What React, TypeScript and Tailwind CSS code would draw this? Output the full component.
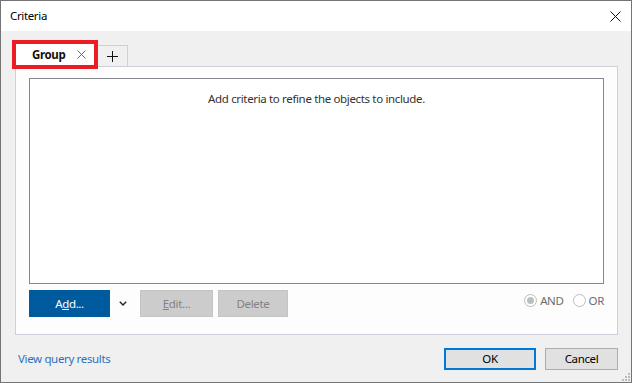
import React from "react";

function Radio({ label, checked }: { label: string; checked?: boolean }) {
  return (
    <div className="flex items-center">
      <span className="w-[13px] h-[13px] rounded-full border border-[#bcbcbc] bg-white flex items-center justify-center">
        {checked && <span className="w-[7px] h-[7px] rounded-full bg-[#bdbdbd]" />}
      </span>
      <span className="ml-[3px] text-[#6d6d6d]">{label}</span>
    </div>
  );
}

export default function App() {
  return (
    <div
      className="w-[632px] h-[383px] border border-[#747474] bg-[#f0f0f0] flex flex-col text-[11.5px] tracking-[-0.35px] text-black leading-none"
      style={{ fontFamily: '"Noto Sans", "Open Sans", sans-serif' }}
    >
      {/* Title bar */}
      <div className="h-[30px] bg-white flex items-center justify-between pl-[9px] pr-[9px] shrink-0">
        <span>Criteria</span>
        <svg width="11" height="11" viewBox="0 0 11 11" className="mr-[1px]">
          <path d="M0.5 0.5 L10.5 10.5 M10.5 0.5 L0.5 10.5" stroke="#111" strokeWidth="1" />
        </svg>
      </div>

      {/* Body */}
      <div className="flex-1 flex flex-col pl-[14px] pr-[13px]">
        {/* Tabs */}
        <div className="flex items-end mt-[9px] -ml-[3px] relative z-10 h-[29px]">
          <div className="w-[86px] h-[29px] border-[4px] border-[#ec1c24] bg-white flex items-center pl-[16px]">
            <span className="font-bold text-[#111]">Group</span>
            <svg width="9" height="9" viewBox="0 0 9 9" className="ml-[12px]">
              <path d="M0.5 0.5 L8.5 8.5 M8.5 0.5 L0.5 8.5" stroke="#6a6a6a" strokeWidth="1" />
            </svg>
          </div>
          <div className="w-[30px] h-[21px] mb-[3px] border border-l-0 border-b-0 border-[#cfcfd8] bg-[#f0f0f0] flex items-center justify-center">
            <svg width="11" height="11" viewBox="0 0 11 11">
              <path d="M5.5 0 V11 M0 5.5 H11" stroke="#111" strokeWidth="1" />
            </svg>
          </div>
        </div>

        {/* Panel */}
        <div className="-mt-[3px] h-[269px] border border-[#cfcfdb] bg-[#fdfdfd] flex flex-col pt-[11px] px-[13px] pb-[16px]">
          <div className="h-[206px] border border-[#828790] bg-white flex justify-center pt-[14px]">
            <span className="text-[#333]">Add criteria to refine the objects to include.</span>
          </div>
          <div className="mt-[6px] flex items-center h-[27px]">
            <button className="w-[81px] h-[27px] bg-[#005a9e] text-white flex items-center justify-center">
              <span>
                A<span className="underline">d</span>d...
              </span>
            </button>
            <div className="w-[30px] flex items-center pl-[9px]">
              <svg width="8" height="5" viewBox="0 0 8 5">
                <path d="M0.8 0.8 L4 4 L7.2 0.8" stroke="#222" strokeWidth="1.4" fill="none" />
              </svg>
            </div>
            <button className="w-[73px] h-[27px] bg-[#cccccc] border border-[#c4c4c4] text-[#838383] flex items-center justify-center">
              <span>
                <span className="underline">E</span>dit...
              </span>
            </button>
            <button className="ml-[5px] w-[70px] h-[27px] bg-[#cccccc] border border-[#c4c4c4] text-[#838383] flex items-center justify-center">
              Delete
            </button>
            <div className="ml-auto flex items-center gap-[9px] -mt-[6px]">
              <Radio label="AND" checked />
              <Radio label="OR" />
            </div>
          </div>
        </div>

        {/* Footer */}
        <div className="flex items-center h-[47px] relative">
          <span className="ml-[3px] text-[#2f6fbd]">View query results</span>
          <div className="ml-auto flex items-center gap-[9px] mt-[1px]">
            <button className="w-[92px] h-[22px] border-2 border-[#0078d7] bg-[#e1e1e1] flex items-center justify-center">
              OK
            </button>
            <button className="w-[73px] h-[22px] border border-[#adadad] bg-[#e1e1e1] flex items-center justify-center">
              Cancel
            </button>
          </div>
          <svg width="10" height="10" viewBox="0 0 10 10" className="absolute right-[-13px] bottom-[0px]">
            <rect x="7" y="1" width="2" height="2" fill="#bcbcbc" />
            <rect x="4" y="4" width="2" height="2" fill="#bcbcbc" />
            <rect x="7" y="4" width="2" height="2" fill="#bcbcbc" />
            <rect x="1" y="7" width="2" height="2" fill="#bcbcbc" />
            <rect x="4" y="7" width="2" height="2" fill="#bcbcbc" />
            <rect x="7" y="7" width="2" height="2" fill="#bcbcbc" />
          </svg>
        </div>
      </div>
    </div>
  );
}
